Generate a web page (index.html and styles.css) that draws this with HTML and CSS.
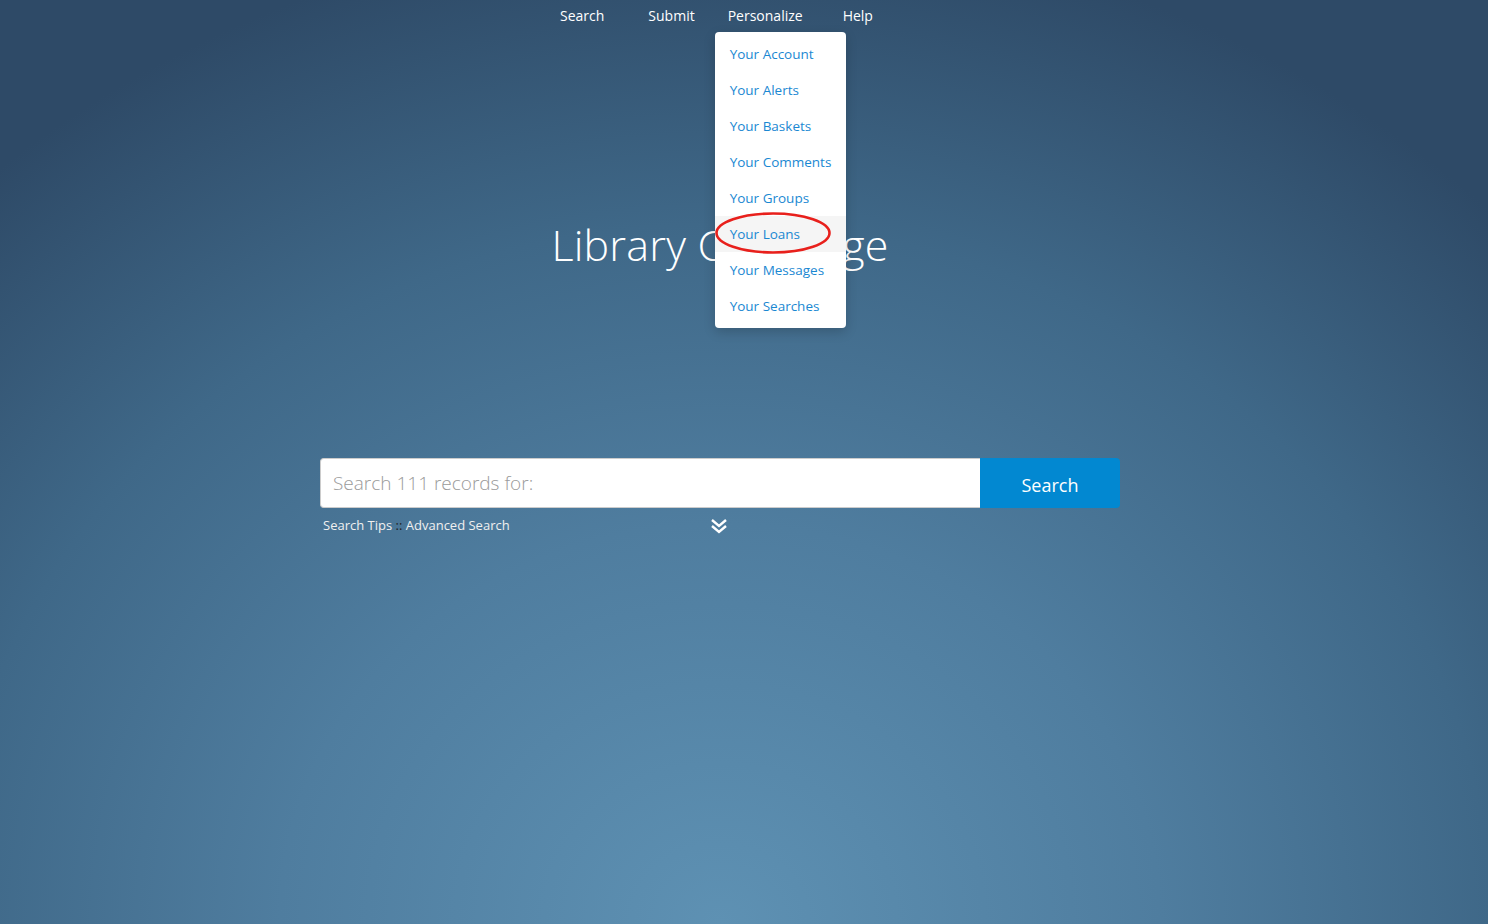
FILE: index.html
```html
<!DOCTYPE html>
<html lang="en">
<head>
<meta charset="utf-8">
<title>Library</title>
<link rel="stylesheet" href="styles.css">
</head>
<body>
<div class="page">
  <div class="column">
    <nav class="topnav">
      <ul class="menu">
        <li class="menu-item"><a href="#">Search</a></li>
        <li class="menu-item"><a href="#">Submit</a></li>
        <li class="menu-item open"><a href="#">Personalize</a>
          <ul class="dropdown">
            <li><a href="#">Your Account</a></li>
            <li><a href="#">Your Alerts</a></li>
            <li><a href="#">Your Baskets</a></li>
            <li><a href="#">Your Comments</a></li>
            <li><a href="#">Your Groups</a></li>
            <li class="hover"><a href="#">Your Loans</a>
              <svg class="ring" width="120" height="46" viewBox="0 0 120 46"><ellipse cx="58" cy="22" rx="56.5" ry="19.5" fill="none" stroke="#e8201c" stroke-width="2.6"/></svg>
            </li>
            <li><a href="#">Your Messages</a></li>
            <li><a href="#">Your Searches</a></li>
          </ul>
        </li>
        <li class="menu-item"><a href="#">Help</a></li>
      </ul>
    </nav>

    <h1 class="title">Library Challenge</h1>

    <form class="search">
      <div class="search-row">
        <input class="search-input" type="text" placeholder="Search 111 records for:">
        <button class="search-btn" type="button">Search</button>
      </div>
      <div class="search-links">
        <div class="links"><a href="#">Search Tips</a> <span class="sep">::</span> <a href="#">Advanced Search</a></div>
        <svg class="chevron" width="18" height="16" viewBox="0 0 18 16"><path d="M2 2 L9 8 L16 2 M2 8 L9 14 L16 8" fill="none" stroke="#fff" stroke-width="2.4"/></svg>
        <div class="spacer"></div>
      </div>
    </form>
  </div>
</div>
</body>
</html>
```

FILE: styles.css
```css
html, body {
  margin: 0;
  height: 100%;
}
body {
  font-family: "Open Sans", "Liberation Sans", sans-serif;
  color: #fff;
  background: radial-gradient(ellipse 1100px 1000px at 720px 924px, #5e91b3 0%, #4f7d9f 40%, #3f6888 70%, #2e4a67 100%);
  background-color: #2e4a67;
  min-height: 924px;
  overflow: hidden;
}
a { text-decoration: none; color: inherit; }
.page {
  padding-right: 48px;
}
.column {
  width: 800px;
  margin: 0 auto;
}
.topnav {
  padding-left: 220px;
}
.menu {
  list-style: none;
  margin: 0;
  padding: 0;
  display: flex;
}
.menu-item {
  position: relative;
  padding: 6px 20px 0;
  font-size: 14px;
  line-height: 20px;
  height: 26px;
}
.menu-item:first-child { padding-right: 24px; }
.menu-item:nth-child(2) { padding-right: 13px; }
.menu-item:nth-child(3) { padding-right: 20px; }
.dropdown {
  position: absolute;
  top: 32px;
  left: 7px;
  width: 131px;
  margin: 0;
  padding: 4px 0;
  list-style: none;
  background: #fff;
  border-radius: 4px;
  box-shadow: 0 4px 12px rgba(0, 0, 0, 0.18);
  z-index: 5;
}
.dropdown li {
  position: relative;
  height: 36px;
  line-height: 36px;
  padding-left: 15px;
  font-size: 13.5px;
  color: #1a88d2;
  white-space: nowrap;
}
.dropdown li.hover {
  background: #f5f5f5;
}
.ring {
  position: absolute;
  left: 0;
  top: -5px;
}
.title {
  margin: 181px 0 0;
  text-align: center;
  font-weight: 300;
  font-size: 43px;
  line-height: 64px;
  letter-spacing: 0.2px;
}
.search {
  margin-top: 181px;
}
.search-row {
  display: flex;
  height: 50px;
}
.search-input {
  flex: 1;
  border: 1px solid #ccc;
  border-right: none;
  border-radius: 4px 0 0 4px;
  padding: 0 12px;
  font-family: "Open Sans", "Liberation Sans", sans-serif;
  font-size: 19px;
  font-weight: 300;
  color: #555;
  outline: none;
}
.search-input::placeholder {
  color: #9a9a9a;
}
.search-btn {
  width: 140px;
  border: none;
  background: #0288d1;
  color: #fff;
  border-radius: 0 4px 4px 0;
  font-family: "Open Sans", "Liberation Sans", sans-serif;
  font-size: 18px;
  padding-top: 4px;
}
.search-links {
  display: flex;
  align-items: center;
  margin-top: 8px;
  font-size: 13px;
  color: #f0f0f0;
}
.links {
  flex: 1;
  padding-left: 3px;
}
.sep { color: #222; }
.chevron { margin-top: 2px; margin-right: 6px; }
.spacer { flex: 1; }
```
